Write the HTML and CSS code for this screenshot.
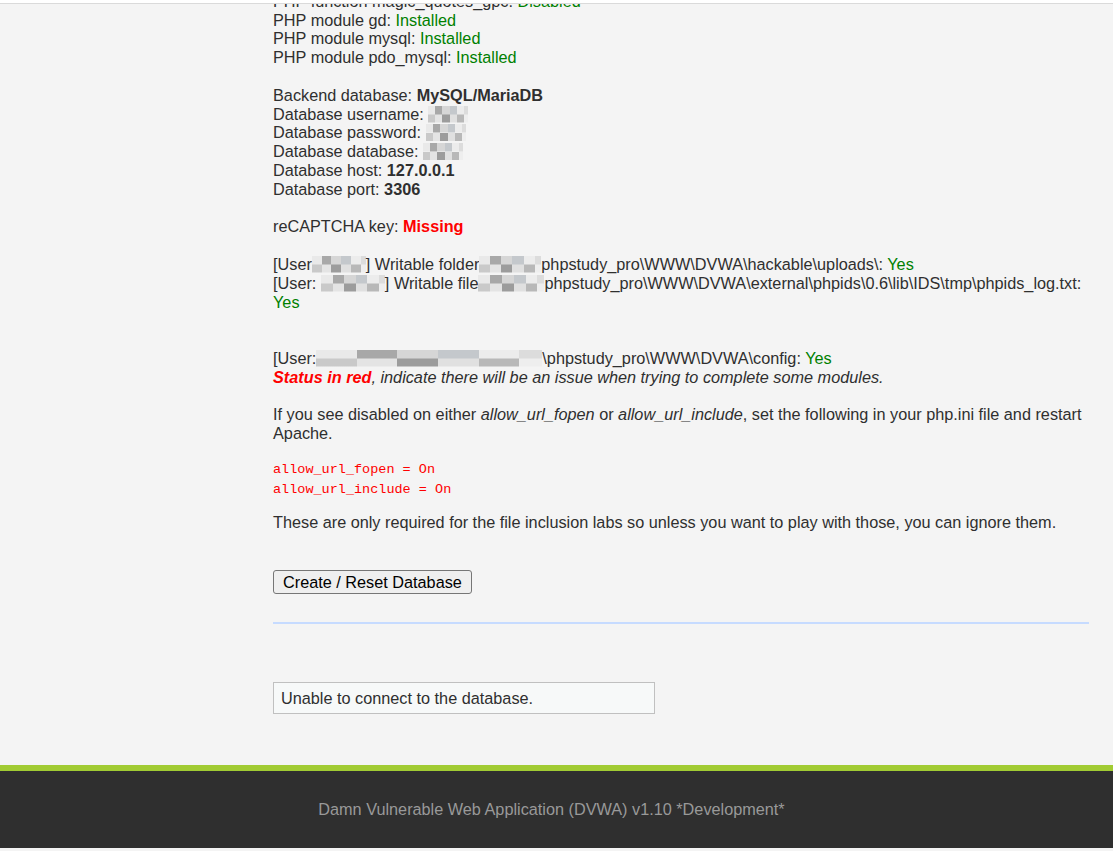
FILE: index.html
```
<!DOCTYPE html>
<html lang="en">

<head>
    <meta charset="UTF-8">
    <meta name="viewport" content="width=device-width, initial-scale=1.0">
    <title>Setup :: Damn Vulnerable Web Application (DVWA) v1.10 *Development*</title>
    <link rel="stylesheet" href="styles.css">
</head>

<body>

    <div class="topbar"></div>

    <div class="container">
        <div class="main-menu"></div>

        <div class="main-body">
            <div class="checks">
                PHP function magic_quotes_gpc: <span class="success">Disabled</span><br>
                PHP module gd: <span class="success">Installed</span><br>
                PHP module mysql: <span class="success">Installed</span><br>
                PHP module pdo_mysql: <span class="success">Installed</span><br>
                <br>
                Backend database: <b>MySQL/MariaDB</b><br>
                Database username: <span class="mosaic m-40"></span><br>
                Database password: <span class="mosaic m-40"></span><br>
                Database database: <span class="mosaic m-40"></span><br>
                Database host: <b>127.0.0.1</b><br>
                Database port: <b>3306</b><br>
                <br>
                reCAPTCHA key: <span class="failure">Missing</span><br>
                <br>
                [User<span class="mosaic m-54"></span>] Writable folder<span class="mosaic m-62"></span>phpstudy_pro\WWW\DVWA\hackable\uploads\: <span class="success">Yes</span><br>
                [User: <span class="mosaic m-64"></span>] Writable file<span class="mosaic m-66"></span>phpstudy_pro\WWW\DVWA\external\phpids\0.6\lib\IDS\tmp\phpids_log.txt: <span class="success">Yes</span><br>
                <br>
                <br>
                [User:<span class="mosaic m-226"></span>\phpstudy_pro\WWW\DVWA\config: <span class="success">Yes</span><br>
                <em class="red">Status in red</em><i>, indicate there will be an issue when trying to complete some modules.</i><br>
                <br>
                If you see disabled on either <i>allow_url_fopen</i> or <i>allow_url_include</i>, set the following in your php.ini file and restart Apache.
                <pre><code>allow_url_fopen = On
allow_url_include = On</code></pre>
                These are only required for the file inclusion labs so unless you want to play with those, you can ignore them.
            </div>

            <!-- Create db button -->
            <form class="create-form" action="#" method="post">
                <input name="create_db" type="submit" value="Create / Reset Database">
            </form>

            <hr>

            <div class="message">Unable to connect to the database.</div>
        </div>
    </div>

    <div class="footer">
        <p>Damn Vulnerable Web Application (DVWA) v1.10 *Development*</p>
    </div>

</body>

</html>
```

FILE: styles.css
```
body {
    font-family: 'Liberation Sans', Arial, Helvetica, sans-serif;
    font-size: 16.25px;
    background-color: #f4f4f4;
    color: #2f2f2f;
    margin: 0;
    padding: 0 0 3px 0;
}

.topbar {
    position: fixed;
    top: 0;
    left: 0;
    right: 0;
    height: 3px;
    background-color: #fff;
    border-bottom: 1px solid #dadada;
    z-index: 2;
}

.container {
    display: flex;
}

.main-menu {
    width: 273px;
    flex-shrink: 0;
}

.main-body {
    flex: 1;
    padding-right: 24px;
    margin-top: -8.2px;
}

.checks {
    line-height: 18.8px;
}

.checks b {
    font-weight: bold;
}

.success {
    color: #008000;
}

.failure {
    color: #ff0000;
    font-weight: bold;
}

.red {
    color: #ff0000;
    font-weight: bold;
}

.checks pre {
    margin: 17px 0 13px 0;
    color: #ff0000;
    font-family: 'Liberation Mono', 'Courier New', monospace;
    font-size: 13.5px;
    line-height: 20px;
}

.checks pre code {
    font: inherit;
}

.mosaic {
    display: inline-block;
    height: 17px;
    vertical-align: -3px;
    background:
        linear-gradient(90deg, #e9e9e9 0 18%, #a8a8a8 18% 36%, #d6d6d6 36% 54%, #c4c8cc 54% 72%, #ececec 72% 90%, #dcdcdc 90%) top / 100% 50% no-repeat,
        linear-gradient(90deg, #c9c9c9 0 18%, #e4e4e4 18% 36%, #9c9c9c 36% 54%, #e0e0e0 54% 72%, #b8b8b8 72% 90%, #eeeeee 90%) bottom / 100% 50% no-repeat;
}

.m-40 { width: 40px; }
.m-54 { width: 54px; }
.m-62 { width: 62px; }
.m-64 { width: 64px; }
.m-66 { width: 66px; }
.m-226 { width: 226px; }

.create-form {
    margin: 38px 0 0 0;
}

.create-form input {
    font-family: 'Liberation Sans', Arial, sans-serif;
    font-size: 16.25px;
    color: #000;
    background-color: #efefef;
    border: 1px solid #767676;
    border-radius: 3px;
    padding: 1px 9px;
    height: 24px;
    line-height: 20px;
}

hr {
    border: 0;
    height: 2px;
    background-color: #c6dbff;
    margin: 28px 0 0 0;
}

.message {
    margin-top: 58px;
    width: 366px;
    height: 30px;
    line-height: 30px;
    padding: 0 7px;
    background-color: #f7f9f9;
    border: 1px solid #c0c0c0;
    color: #2f2f2f;
}

.footer {
    margin-top: 51px;
    background-color: #2f2f2f;
    border-top: 6px solid #a1cb33;
    height: 77px;
    display: flex;
    align-items: center;
    justify-content: center;
    padding-right: 10px;
}

.footer p {
    margin: 0;
    color: #999;
}
```
